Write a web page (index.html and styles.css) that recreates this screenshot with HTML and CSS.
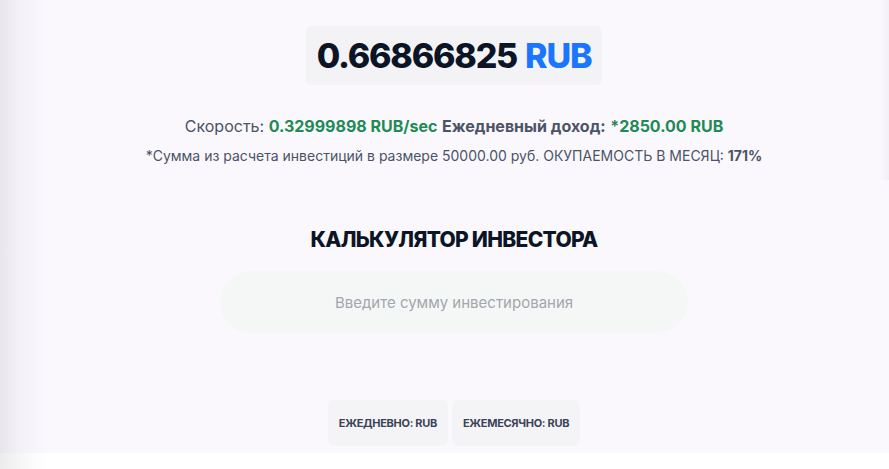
FILE: index.html
```html
<!DOCTYPE html>
<html lang="ru">
<head>
<meta charset="utf-8">
<title>Калькулятор инвестора</title>
<link rel="stylesheet" href="styles.css">
</head>
<body>
<main class="page">
  <section class="balance-wrap">
    <div class="balance"><span class="amount">0.66866825</span> <span class="cur">RUB</span></div>
  </section>
  <p class="speed">Скорость: <b class="green">0.32999898 RUB/sec</b> <b class="dark">Ежедневный доход:</b> <b class="green">*2850.00 RUB</b></p>
  <p class="note">*Сумма из расчета инвестиций в размере 50000.00 руб. ОКУПАЕМОСТЬ В МЕСЯЦ: <b>171%</b></p>
  <h2 class="title">КАЛЬКУЛЯТОР ИНВЕСТОРА</h2>
  <div class="input-wrap">
    <input class="sum" type="text" placeholder="Введите сумму инвестирования">
  </div>
  <div class="results">
    <div class="res">ЕЖЕДНЕВНО: RUB</div>
    <div class="res">ЕЖЕМЕСЯЧНО: RUB</div>
  </div>
</main>
</body>
</html>
```
FILE: styles.css
```css
html, body {
  margin: 0;
  padding: 0;
}
body {
  font-family: Inter, "Noto Sans", sans-serif;
  background: linear-gradient(to right, #ececee 0, #fafafa 30px, #ffffff 46px);
  height: 469px;
  overflow: hidden;
}
.page {
  height: 453px;
  box-sizing: border-box;
  padding-top: 26px;
  padding-left: 19px;
  background:
    linear-gradient(to left, #f2f0f6 0, #faf8fd 9px) right top / 30px 180px no-repeat,
    linear-gradient(to right, #e8e6ed 0, #f3f1f7 18px, #faf8fd 46px);
  display: flex;
  flex-direction: column;
  align-items: center;
}
.balance-wrap {
  display: flex;
  justify-content: center;
}
.balance {
  background: #f3f3f5;
  border-radius: 5px;
  height: 59px;
  box-sizing: border-box;
  padding: 0 11px;
  display: flex;
  align-items: center;
  gap: 8px;
  font-weight: 800;
  font-size: 34px;
  letter-spacing: -1.2px;
}
.amount { color: #0b1526; }
.cur { color: #1a76ff; }
.speed {
  margin: 31px 0 0;
  font-size: 16px;
  line-height: 20px;
  color: #4b5366;
}
.speed b { font-weight: 700; }
.green { color: #1f8a55; }
.dark { color: #4b5366; }
.note {
  margin: 11px 0 0;
  font-size: 14px;
  line-height: 18px;
  color: #4b5366;
}
.note b { font-weight: 700; }
.title {
  margin: 62px 0 0;
  font-size: 21px;
  line-height: 26px;
  font-weight: 800;
  color: #0b1526;
  letter-spacing: -0.7px;
}
.input-wrap {
  margin-top: 18px;
}
.sum {
  width: 468px;
  height: 62px;
  box-sizing: border-box;
  border: none;
  outline: none;
  border-radius: 31px;
  background: #f5f7f6;
  text-align: center;
  font-family: Inter, "Noto Sans", sans-serif;
  font-size: 15px;
  color: #333;
  display: block;
}
.sum::placeholder { color: #a3a6ae; }
.results {
  margin-top: 67px;
  display: flex;
  gap: 4px;
}
.res {
  height: 46px;
  display: flex;
  align-items: center;
  padding: 0 11px;
  background: #f4f4f6;
  border-radius: 5px;
  font-size: 11px;
  font-weight: 700;
  color: #3b4358;
  letter-spacing: -0.3px;
}
```
